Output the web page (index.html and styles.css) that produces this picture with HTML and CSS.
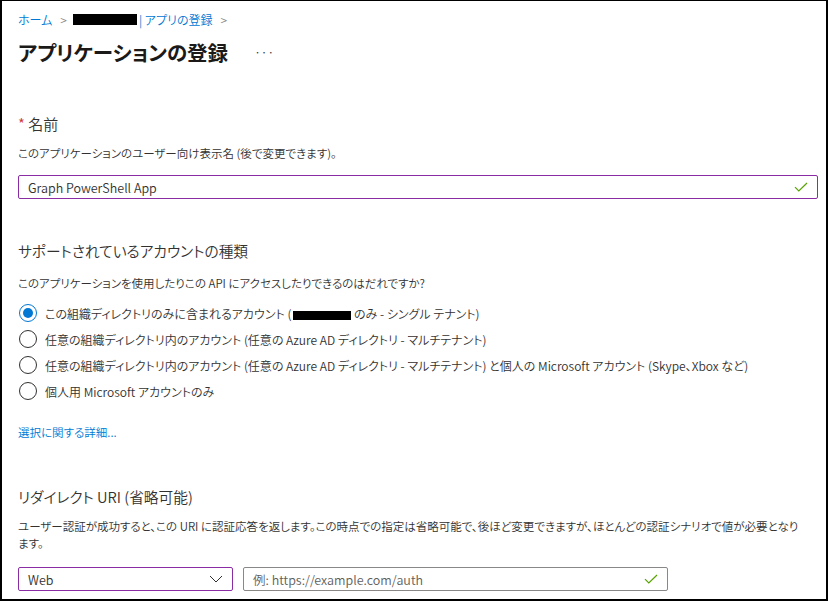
FILE: index.html
```html
<!DOCTYPE html>
<html lang="ja">
<head>
<meta charset="utf-8">
<title>アプリケーションの登録</title>
<link rel="stylesheet" href="styles.css">
</head>
<body>
<div class="frame">
  <nav class="crumbs">
    <a class="crumb">ホーム</a>
    <span class="sep">&gt;</span>
    <span class="redact redact-crumb"></span>
    <a class="crumb">| アプリの登録</a>
    <span class="sep">&gt;</span>
  </nav>
  <header class="title-row">
    <h1 class="title">アプリケーションの登録</h1>
    <span class="more">···</span>
  </header>

  <section class="field field-name">
    <div class="label"><span class="req">*</span> 名前</div>
    <p class="desc">このアプリケーションのユーザー向け表示名 (後で変更できます)。</p>
    <div class="input input-valid">
      <span class="value">Graph PowerShell App</span>
      <svg class="check" width="14" height="10" viewBox="0 0 14 10"><path d="M1 5.2 L4.8 9 L13 1" fill="none" stroke="#57a300" stroke-width="1.2"/></svg>
    </div>
  </section>

  <section class="field field-accounts">
    <h2 class="heading">サポートされているアカウントの種類</h2>
    <p class="desc">このアプリケーションを使用したりこの API にアクセスしたりできるのはだれですか?</p>
    <ul class="radios">
      <li class="radio checked"><span class="dot"></span><span>この組織ディレクトリのみに含まれるアカウント (<span class="redact redact-radio"></span> のみ - シングル テナント)</span></li>
      <li class="radio"><span class="dot"></span><span>任意の組織ディレクトリ内のアカウント (任意の Azure AD ディレクトリ - マルチテナント)</span></li>
      <li class="radio"><span class="dot"></span><span>任意の組織ディレクトリ内のアカウント (任意の Azure AD ディレクトリ - マルチテナント) と個人の Microsoft アカウント (Skype、Xbox など)</span></li>
      <li class="radio"><span class="dot"></span><span>個人用 Microsoft アカウントのみ</span></li>
    </ul>
    <a class="link">選択に関する詳細...</a>
  </section>

  <section class="field field-redirect">
    <h2 class="heading">リダイレクト URI (省略可能)</h2>
    <p class="desc desc-wrap">ユーザー認証が成功すると、この URI に認証応答を返します。この時点での指定は省略可能で、後ほど変更できますが、ほとんどの認証シナリオで値が必要となります。</p>
    <div class="controls">
      <div class="select">
        <span class="value">Web</span>
        <svg class="chev" width="14" height="8" viewBox="0 0 14 8"><path d="M1 1 L7 7 L13 1" fill="none" stroke="#323130" stroke-width="1"/></svg>
      </div>
      <div class="input input-uri">
        <span class="placeholder">例: https://example.com/auth</span>
        <svg class="check" width="14" height="10" viewBox="0 0 14 10"><path d="M1 5.2 L4.8 9 L13 1" fill="none" stroke="#57a300" stroke-width="1.2"/></svg>
      </div>
    </div>
  </section>
</div>
</body>
</html>
```

FILE: styles.css
```css
* { box-sizing: border-box; }
html, body { margin: 0; padding: 0; background: #fff; }
body {
  font-family: "Noto Sans CJK JP", "Noto Sans", sans-serif;
  font-feature-settings: "palt";
  font-weight: 350;
  color: #323130;
}
.frame {
  width: 828px;
  height: 601px;
  border-style: solid;
  border-color: #000;
  border-width: 1px 2px 2px 2px;
  padding: 0 0 0 16px;
  overflow: hidden;
}
.crumbs {
  display: flex;
  align-items: center;
  height: 20px;
  margin-top: 8px;
  font-size: 12px;
}
.crumb { color: #0078d4; }
.sep { color: #8a8886; font-size: 12px; margin: 0 6px 0 8px; }
.redact { display: inline-block; background: #000; }
.redact-crumb { width: 64px; height: 11px; margin-right: 2px; }
.title-row {
  display: flex;
  align-items: center;
  height: 30px;
  margin-top: 8px;
}
.title {
  margin: 0;
  font-size: 20.5px;
  font-weight: 600;
  line-height: 30px;
  color: #1b1a19;
}
.more { margin-left: 26px; font-size: 12px; line-height: 30px; color: #323130; letter-spacing: 0; }

.field-name { margin-top: 47px; }
.label { font-size: 15px; line-height: 20px; }
.req { color: #d13438; }
.desc { margin: 0; font-size: 11.5px; line-height: 17px; }
.field-name .desc { margin-top: 11px; }
.input, .select {
  display: flex;
  align-items: center;
  justify-content: space-between;
  height: 24px;
  padding: 0 9px;
  font-size: 12.5px;
  border: 1px solid #8a8886;
  border-radius: 2px;
  background: #fff;
}
.input-valid { margin-top: 13px; width: 800px; border-color: #8a2da5; }
.check { flex: none; }

.field-accounts { margin-top: 41px; }
.heading { margin: 0; font-size: 14.7px; font-weight: 350; line-height: 22px; }
.field-accounts .desc { margin-top: 13px; }
.radios { list-style: none; margin: 8px 0 0 0; padding: 0; }
.radio {
  display: flex;
  align-items: center;
  height: 26px;
  font-size: 12px;
  gap: 8px;
}
.dot {
  width: 18px;
  height: 18px;
  border: 1px solid #323130;
  border-radius: 50%;
  margin-left: 1px;
  flex: none;
  display: flex;
  align-items: center;
  justify-content: center;
}
.checked .dot { border-color: #0078d4; }
.checked .dot::after {
  content: "";
  width: 10px;
  height: 10px;
  border-radius: 50%;
  background: #0078d4;
}
.redact-radio { width: 58px; height: 9px; vertical-align: middle; margin-left: 2px; }
.link { display: block; margin-top: 20px; font-size: 11.5px; line-height: 17px; color: #0078d4; }

.field-redirect { margin-top: 45px; }
.desc-wrap { margin-top: 10px; max-width: 790px; }
.controls { display: flex; gap: 10px; margin-top: 15px; }
.select { width: 215px; border-color: #8a2da5; }
.chev { flex: none; }
.input-uri { width: 425px; }
.placeholder { color: #605e5c; }
```
